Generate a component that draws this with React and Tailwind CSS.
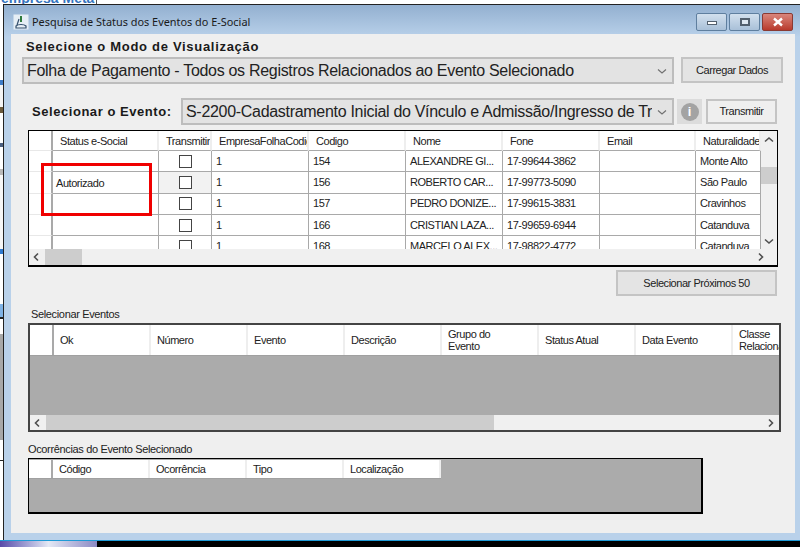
import React from "react";

const sans = "font-['Liberation_Sans',Arial,sans-serif]";
const small = "text-[11px] tracking-[-0.45px] text-[#222]";
const label = "text-[11px] tracking-[-0.35px] text-[#222]";

function Chevron({ dir, className = "", thin = false }) {
  const d = { left: "M6 1.5 2.5 5 6 8.5", right: "M3 1.5 6.5 5 3 8.5", up: "M1 6.5 5 3l4 3.5", down: "M1 3.5 5 7l4-3.5" }[dir];
  return (
    <svg viewBox="0 0 10 10" className={`w-[10px] h-[10px] ${className}`} fill="none" stroke={thin ? "#707070" : "#505050"} strokeWidth={thin ? 1.1 : 1.6}>
      <path d={d} />
    </svg>
  );
}

function Checkbox() {
  return <span className="block w-[13px] h-[13px] border border-[#444] bg-white" />;
}

function Button({ children, className = "" }) {
  return (
    <div className={`flex items-center justify-center border-2 border-[#c4c4c4] bg-[#e4e4e4] ${small} ${className}`}>
      {children}
    </div>
  );
}

function Combo({ children, className = "" }) {
  return (
    <div className={`flex items-center border-2 border-[#bdbdbd] bg-[#e3e3e3] text-[#222] ${className}`}>
      <span className="flex-1 min-w-0 overflow-hidden whitespace-nowrap text-[16px] tracking-[-0.3px] pl-[3px]">{children}</span>
      <Chevron dir="down" thin className="mx-[5px] shrink-0" />
    </div>
  );
}

function Cell({ className, children }) {
  return <div className={`shrink-0 flex items-center overflow-hidden whitespace-nowrap ${small} border-r border-b border-[#a9a9a9] ${className}`}>{children}</div>;
}

const mainColumns = [
  { title: "Status e-Social", w: "w-[106px]", key: "s" },
  { title: "Transmitir", w: "w-[53px]", key: "t" },
  { title: "EmpresaFolhaCodigo", w: "w-[97px]", key: "e" },
  { title: "Codigo", w: "w-[97px]", key: "c" },
  { title: "Nome", w: "w-[97px]", key: "n" },
  { title: "Fone", w: "w-[97px]", key: "f" },
  { title: "Email", w: "w-[96px]", key: "m" },
  { title: "Naturalidade", w: "w-[65px]", key: "u" },
];

const rows = [
  { s: "", e: "1", c: "154", n: "ALEXANDRE GI...", f: "17-99644-3862", m: "", u: "Monte Alto" },
  { s: "Autorizado", e: "1", c: "156", n: "ROBERTO CAR...", f: "17-99773-5090", m: "", u: "São Paulo", hover: true },
  { s: "", e: "1", c: "157", n: "PEDRO DONIZE...", f: "17-99615-3831", m: "", u: "Cravinhos" },
  { s: "", e: "1", c: "166", n: "CRISTIAN LAZA...", f: "17-99659-6944", m: "", u: "Catanduva" },
  { s: "", e: "1", c: "168", n: "MARCELO ALEX...", f: "17-98822-4772", m: "", u: "Catanduva" },
];

function HeaderCell({ className, children }) {
  return (
    <div className={`shrink-0 h-full flex items-center overflow-hidden leading-[12px] border-r-2 border-[#eeeeee] ${small} ${className}`}>
      {children}
    </div>
  );
}

function RowHead({ className = "" }) {
  return <div className={`shrink-0 w-[24px] border-r-2 border-[#a9a9a9] bg-white ${className}`} />;
}

function MainGrid() {
  return (
    <div className="relative ml-[17px] mt-[5px] w-[750px] h-[137px] border border-black border-b-2 bg-white flex flex-col">
      <div className="flex-1 min-h-0 flex">
        <div className="flex-1 min-w-0 flex flex-col overflow-hidden">
          <div className="h-[20px] shrink-0 flex">
            <RowHead className="border-b border-b-[#e8e8e8]" />
            {mainColumns.map((c) => (
              <HeaderCell key={c.title} className={`${c.w} pl-[7px] whitespace-nowrap border-b-[#a9a9a9] border-b`}>{c.title}</HeaderCell>
            ))}
          </div>
          {rows.map((r) => (
            <div key={r.c} className="h-[21.3px] shrink-0 flex">
              <RowHead className="border-b border-b-[#e8e8e8]" />
              {mainColumns.map((c) =>
                c.key === "t" ? (
                  <Cell key={c.key} className={`${c.w} justify-center ${r.hover ? "bg-[#f2f2f2]" : ""}`}>
                    <Checkbox />
                  </Cell>
                ) : (
                  <Cell key={c.key} className={`${c.w} ${c.key === "s" ? "pl-[3px] pt-[1px]" : "pl-[4px]"}`}>{r[c.key]}</Cell>
                )
              )}
            </div>
          ))}
        </div>
        <div className="w-[16px] shrink-0 bg-[#f0f0f0] flex flex-col items-center">
          <div className="h-[17px] flex items-center"><Chevron dir="up" /></div>
          <div className="mt-[19px] w-full h-[17px] bg-[#cdcdcd]" />
          <div className="mt-auto h-[17px] flex items-center"><Chevron dir="down" /></div>
        </div>
      </div>
      <div className="h-[16px] shrink-0 bg-[#f0f0f0] flex items-center">
        <div className="w-[16px] flex justify-center"><Chevron dir="left" /></div>
        <div className="w-[37px] h-full bg-[#cdcdcd]" />
        <div className="ml-auto w-[32px] flex justify-center"><Chevron dir="right" /></div>
      </div>
      <div className="absolute left-[12px] top-[32px] w-[111px] h-[53px] border-[3px] border-[#f00000]" />
    </div>
  );
}

const eventColumns = [
  { t: "Ok", w: "w-[97px]" },
  { t: "Número", w: "w-[97px]" },
  { t: "Evento", w: "w-[97px]" },
  { t: "Descrição", w: "w-[97px]" },
  { t: "Grupo do Evento", w: "w-[97px]" },
  { t: "Status Atual", w: "w-[97px]" },
  { t: "Data Evento", w: "w-[97px]" },
  { t: "Classe Relacionada", w: "w-[50px]" },
];

function EventsGrid() {
  return (
    <div className="ml-[17px] mt-[1px] w-[753px] h-[109px] border-2 border-[#444] bg-[#ababab] flex flex-col">
      <div className="h-[31px] shrink-0 flex bg-white border-b border-[#a0a0a0] overflow-hidden">
        <RowHead className="w-[23px]" />
        {eventColumns.map((c) => (
          <HeaderCell key={c.t} className={`${c.w} pl-[6px] pr-[16px]`}>{c.t}</HeaderCell>
        ))}
      </div>
      <div className="flex-1 min-h-0" />
      <div className="h-[15px] shrink-0 bg-[#f0f0f0] flex items-center">
        <div className="w-[16px] flex justify-center"><Chevron dir="left" /></div>
        <div className="w-[448px] h-full bg-[#cdcdcd]" />
        <div className="ml-auto w-[16px] flex justify-center"><Chevron dir="right" /></div>
      </div>
    </div>
  );
}

const occColumns = [
  { t: "Código", w: "w-[97px]" },
  { t: "Ocorrência", w: "w-[97px]" },
  { t: "Tipo", w: "w-[97px]" },
  { t: "Localização", w: "w-[97px]" },
];

function OccurrenceGrid() {
  return (
    <div className="ml-[17px] mt-[1px] w-[675px] h-[56px] border border-black border-b-2 border-r-2 bg-[#ababab]">
      <div className="mt-[1px] h-[19px] w-[412px] flex bg-white border-b border-[#a0a0a0]">
        <RowHead className="w-[24px]" />
        {occColumns.map((c) => (
          <HeaderCell key={c.t} className={`${c.w} pl-[6px] whitespace-nowrap`}>{c.t}</HeaderCell>
        ))}
      </div>
    </div>
  );
}

function TitleBar() {
  return (
    <div className="h-[29px] shrink-0 flex items-center pl-[2px] pr-[2px] pt-[5px]">
      <svg viewBox="0 0 16 16" className="w-[16px] h-[16px] shrink-0">
        <rect x="0.5" y="0.5" width="15" height="15" fill="#e6eef5" />
        <path d="M7 2h2v6H7z" fill="#2f7a3c" />
        <path d="M6 5 4 11M3 12c2-2 8-2 10 0v2H3z" fill="none" stroke="#35506e" strokeWidth="1.2" />
      </svg>
      <span className="ml-[3px] text-[10.9px] text-[#1a1a1a] font-['Noto_Sans',sans-serif] whitespace-nowrap">
        Pesquisa de Status dos Eventos do E-Social
      </span>
      <div className="ml-auto flex items-start gap-[2px] self-start mt-[3px]">
        <div className="w-[31px] h-[18px] rounded-[2px] border border-[#5f7f9f] bg-linear-to-b from-[#d2e0ee] to-[#a9c0d8] flex items-center justify-center">
          <span className="mt-[2px] block w-[10px] h-[4px] bg-white border border-[#53606e]" />
        </div>
        <div className="w-[31px] h-[18px] rounded-[2px] border border-[#5f7f9f] bg-linear-to-b from-[#d2e0ee] to-[#a9c0d8] flex items-center justify-center">
          <span className="block w-[10px] h-[8px] bg-[#dfe8f1] border-2 border-[#53606e]" />
        </div>
        <div className="w-[31px] h-[18px] rounded-[2px] border border-[#8a3a33] bg-linear-to-b from-[#d9857b] to-[#b8392c] flex items-center justify-center">
          <svg viewBox="0 0 12 10" className="w-[12px] h-[10px]">
            <path d="M2 1.5 10 8.5M10 1.5 2 8.5" stroke="#fff" strokeWidth="2.4" fill="none" />
          </svg>
        </div>
      </div>
    </div>
  );
}

/* The part of the window behind that shows down the left edge. */
const behind = [
  { h: "h-[76px]", c: "bg-white" },
  { h: "h-[5px]", c: "bg-[#3d7cc8]" },
  { h: "h-[22px]", c: "bg-[#f4f4f4]" },
  { h: "h-[6px]", c: "bg-[#6b5a3c]" },
  { h: "h-[30px]", c: "bg-white" },
  { h: "h-[4px]", c: "bg-[#4a5f80]" },
  { h: "h-[22px]", c: "bg-white" },
  { h: "h-[6px]", c: "bg-[#b9b9b9]" },
  { h: "h-[74px]", c: "bg-[#f6f6f6]" },
  { h: "h-[5px]", c: "bg-[#2f7ad0]" },
  { h: "h-[50px]", c: "bg-white" },
  { h: "h-[13px]", c: "bg-[#7fb2e5]" },
  { h: "h-[2px]", c: "bg-[#222]" },
  { h: "h-[15px]", c: "bg-white" },
  { h: "h-[106px]", c: "bg-[#a8a8a8]" },
  { h: "h-[20px]", c: "bg-white" },
  { h: "h-[1px]", c: "bg-[#222]" },
  { h: "h-[79px]", c: "bg-white" },
];

export default function App() {
  return (
    <div className={`w-[800px] h-[547px] overflow-hidden bg-white flex flex-col ${sans}`}>
      <div className="h-[4px] shrink-0 overflow-hidden flex">
        <div className="w-[97px] border-r border-[#555] overflow-hidden">
          <div className="-mt-[10px] text-[14px] leading-[16px] font-bold text-[#3573bd] whitespace-nowrap pl-[1px]">
            empresa Meta
          </div>
        </div>
      </div>
      <div className="flex-1 min-h-0 flex">
        <div className="w-[3px] shrink-0 flex flex-col overflow-hidden">
          {behind.map((s, i) => (
            <div key={i} className={`shrink-0 ${s.h} ${s.c}`} />
          ))}
        </div>
        <div className="flex-1 min-w-0 border-t border-l border-[#222] bg-[#b8d1ea] flex flex-col">
          <div className="flex-1 min-h-0 flex flex-col bg-linear-to-b from-[#93b0d0] from-0% to-[#b9d1ea] to-[6%] pl-[7px] pr-[5px] pb-[7px]">
            <TitleBar />
            <div className="flex-1 min-h-0 bg-[#efefef] flex flex-col">
              <div className="pl-[15px] pt-[3px] h-[23px] text-[13px] font-bold tracking-[0.7px] text-[#1a1a1a] whitespace-nowrap">
                Selecione o Modo de Visualização
              </div>
              <div className="flex pl-[11px] items-start">
                <Combo className="w-[652px] h-[27px]">Folha de Pagamento - Todos os Registros Relacionados ao Evento Selecionado</Combo>
                <Button className="ml-[7px] w-[102px] h-[26px]">Carregar Dados</Button>
              </div>
              <div className="flex items-center mt-[14px] pl-[21px]">
                <span className="w-[149px] pt-[1px] text-[13px] font-bold tracking-[0.55px] text-[#1a1a1a] whitespace-nowrap">Selecionar o Evento:</span>
                <Combo className="w-[493px] h-[27px]">S-2200-Cadastramento Inicial do Vínculo e Admissão/Ingresso de Trabalhador</Combo>
                <div className="ml-[3px] w-[25px] h-[25px] bg-[#dcdcdc] flex items-center justify-center">
                  <span className="w-[18px] h-[18px] rounded-full bg-[#a3a3a3] text-white text-[13px] leading-[18px] font-bold text-center">i</span>
                </div>
                <Button className="ml-[4px] w-[71px] h-[25px] bg-[#efefef]">Transmitir</Button>
              </div>
              <MainGrid />
              <div className="flex justify-end pr-[18px] mt-[3px]">
                <Button className="w-[161px] h-[26px]">Selecionar Próximos 50</Button>
              </div>
              <div className={`pl-[20px] mt-[11px] h-[15px] leading-[15px] ${label}`}>Selecionar Eventos</div>
              <EventsGrid />
              <div className={`pl-[17px] mt-[10px] h-[15px] leading-[15px] ${label}`}>Ocorrências do Evento Selecionado</div>
              <OccurrenceGrid />
            </div>
          </div>
        </div>
      </div>
      <div className="h-[7px] shrink-0 bg-black border-t border-[#1e9ad6] flex">
        <div className="w-[97px] h-full bg-linear-to-r from-[#5a4aa8] via-[#e4e8f4] to-[#8d8ac4]" />
      </div>
    </div>
  );
}
